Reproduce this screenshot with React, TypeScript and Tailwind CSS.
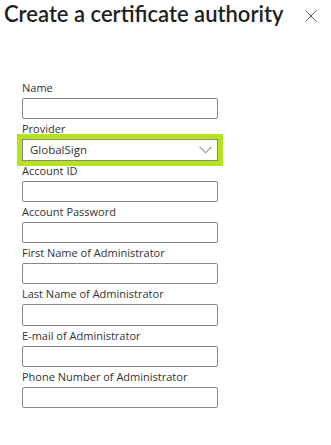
import React from "react";

const fields = [
  "Name",
  "Provider",
  "Account ID",
  "Account Password",
  "First Name of Administrator",
  "Last Name of Administrator",
  "E-mail of Administrator",
  "Phone Number of Administrator",
];

export default function App() {
  return (
    <div
      className="w-[331px] h-[445px] bg-white text-[#323130] overflow-hidden"
      style={{ fontFamily: "'Open Sans', 'Noto Sans', sans-serif" }}
    >
      <div className="flex items-start justify-between pl-[4px] pr-[14px] h-[78px]">
        <h1
          className="text-[22px] leading-[27px] font-semibold whitespace-nowrap text-[#201f1e]"
          style={{ fontFamily: "Lato, 'Open Sans', sans-serif" }}
        >
          Create a certificate authority
        </h1>
        <svg width="12" height="12" viewBox="0 0 12 12" className="mt-[10px]">
          <path d="M0.5 0.5 L11.5 11.5 M11.5 0.5 L0.5 11.5" stroke="#605e5c" strokeWidth="1" fill="none" />
        </svg>
      </div>
      <div className="pl-[22px] w-[218px] flex flex-col">
        {fields.map((f) => (
          <div key={f} className="flex flex-col">
            <div className="h-[20px] text-[11px] leading-[19px] whitespace-nowrap">{f}</div>
            {f === "Provider" ? (
              <div className="h-[21.3px] border border-[#8a8886] outline outline-[5px] outline-[#b5e41e] flex items-center justify-between pl-[7px] pr-[5px] text-[11.5px]">
                <span>GlobalSign</span>
                <svg width="13" height="8" viewBox="0 0 13 8">
                  <path d="M0.5 0.8 L6.5 6.8 L12.5 0.8" stroke="#605e5c" strokeWidth="1" fill="none" />
                </svg>
              </div>
            ) : (
              <div className="h-[21.3px] border border-[#8a8886] rounded-[2px] bg-white" />
            )}
          </div>
        ))}
      </div>
    </div>
  );
}
